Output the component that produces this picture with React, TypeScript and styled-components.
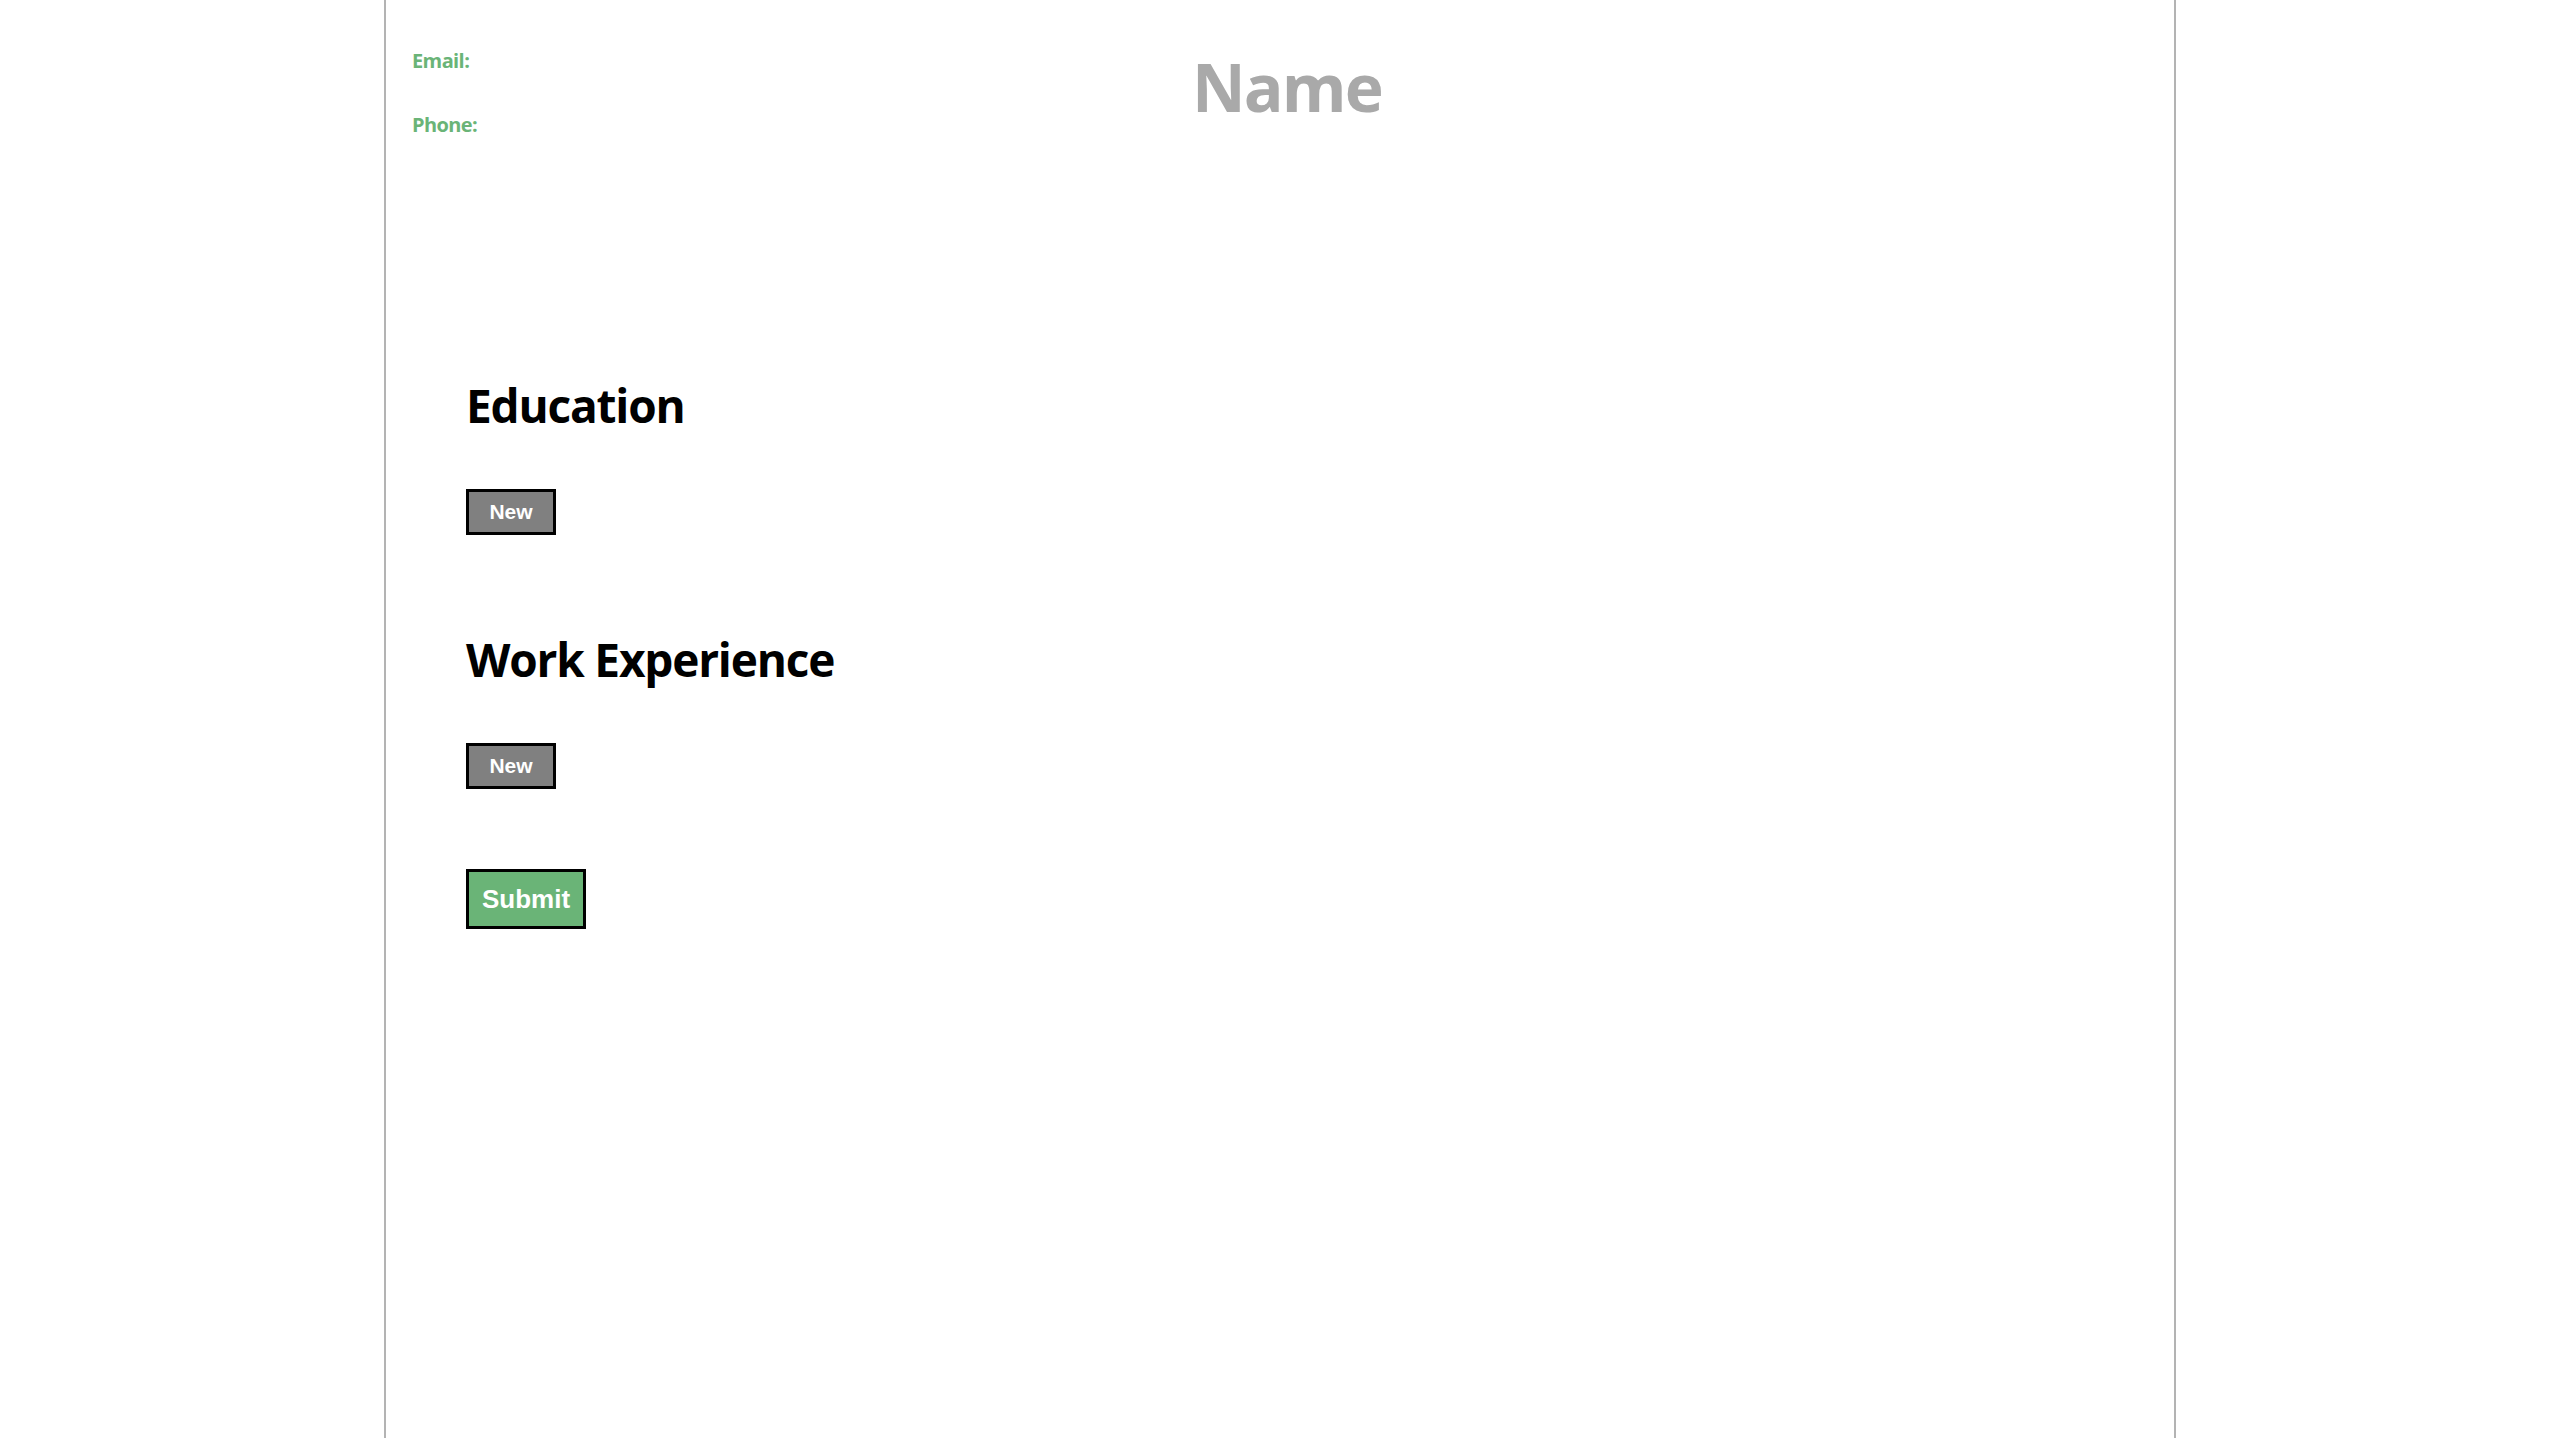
import styled, { createGlobalStyle } from 'styled-components';

const GlobalStyle = createGlobalStyle`
  html, body {
    margin: 0;
    padding: 0;
    background: #ffffff;
  }
  body {
    font-family: "Open Sans", "Noto Sans", sans-serif;
  }
`;

const Page = styled.div`
  width: 70%;
  min-height: 100vh;
  margin: 0 auto;
  border-left: 2px solid #b3b3b3;
  border-right: 2px solid #b3b3b3;
  box-sizing: border-box;
`;

const Header = styled.header`
  display: grid;
  grid-template-columns: 1fr auto 1fr;
  height: 156px;
  padding-left: 26px;
`;

const Contact = styled.div`
  display: flex;
  flex-direction: column;
  padding-top: 29px;
`;

const ContactLabel = styled.p`
  margin: 0;
  font-size: 20px;
  line-height: 64px;
  font-weight: 700;
  letter-spacing: -0.6px;
  color: #6ab477;
`;

const Name = styled.h1`
  margin: 47px 12px 0 0;
  font-size: 66px;
  line-height: 1.2;
  font-weight: 700;
  letter-spacing: -1.8px;
  color: #a9a9a9;
`;

const Main = styled.main`
  display: flex;
  flex-direction: column;
  align-items: flex-start;
  padding: 222px 0 0 80px;
`;

const Section = styled.section`
  display: flex;
  flex-direction: column;
  align-items: flex-start;
  gap: 56px;
  margin-bottom: 97px;

  &:last-of-type {
    margin-bottom: 80px;
  }
`;

const SectionTitle = styled.h2`
  margin: 0;
  font-size: 46px;
  line-height: 1.2;
  font-weight: 700;
  letter-spacing: -1.2px;
  color: #000000;
`;

const Button = styled.button<{ $variant?: 'new' | 'submit' }>`
  box-sizing: border-box;
  border: 3px solid #000000;
  border-radius: 0;
  font-family: "Liberation Sans", Arial, sans-serif;
  font-weight: 700;
  color: #ffffff;
  cursor: pointer;
  background: ${(p) => (p.$variant === 'submit' ? '#6ab477' : '#808080')};
  font-size: ${(p) => (p.$variant === 'submit' ? '26px' : '21px')};
  width: ${(p) => (p.$variant === 'submit' ? '120px' : '90px')};
  height: ${(p) => (p.$variant === 'submit' ? '60px' : '46px')};
  padding: 0;
`;

export default function App() {
  return (
    <>
      <GlobalStyle />
      <Page>
        <Header>
          <Contact>
            <ContactLabel>Email:</ContactLabel>
            <ContactLabel>Phone:</ContactLabel>
          </Contact>
          <Name>Name</Name>
          <div />
        </Header>
        <Main>
          <Section>
            <SectionTitle>Education</SectionTitle>
            <Button $variant="new">New</Button>
          </Section>
          <Section>
            <SectionTitle>Work Experience</SectionTitle>
            <Button $variant="new">New</Button>
          </Section>
          <Button $variant="submit">Submit</Button>
        </Main>
      </Page>
    </>
  );
}
